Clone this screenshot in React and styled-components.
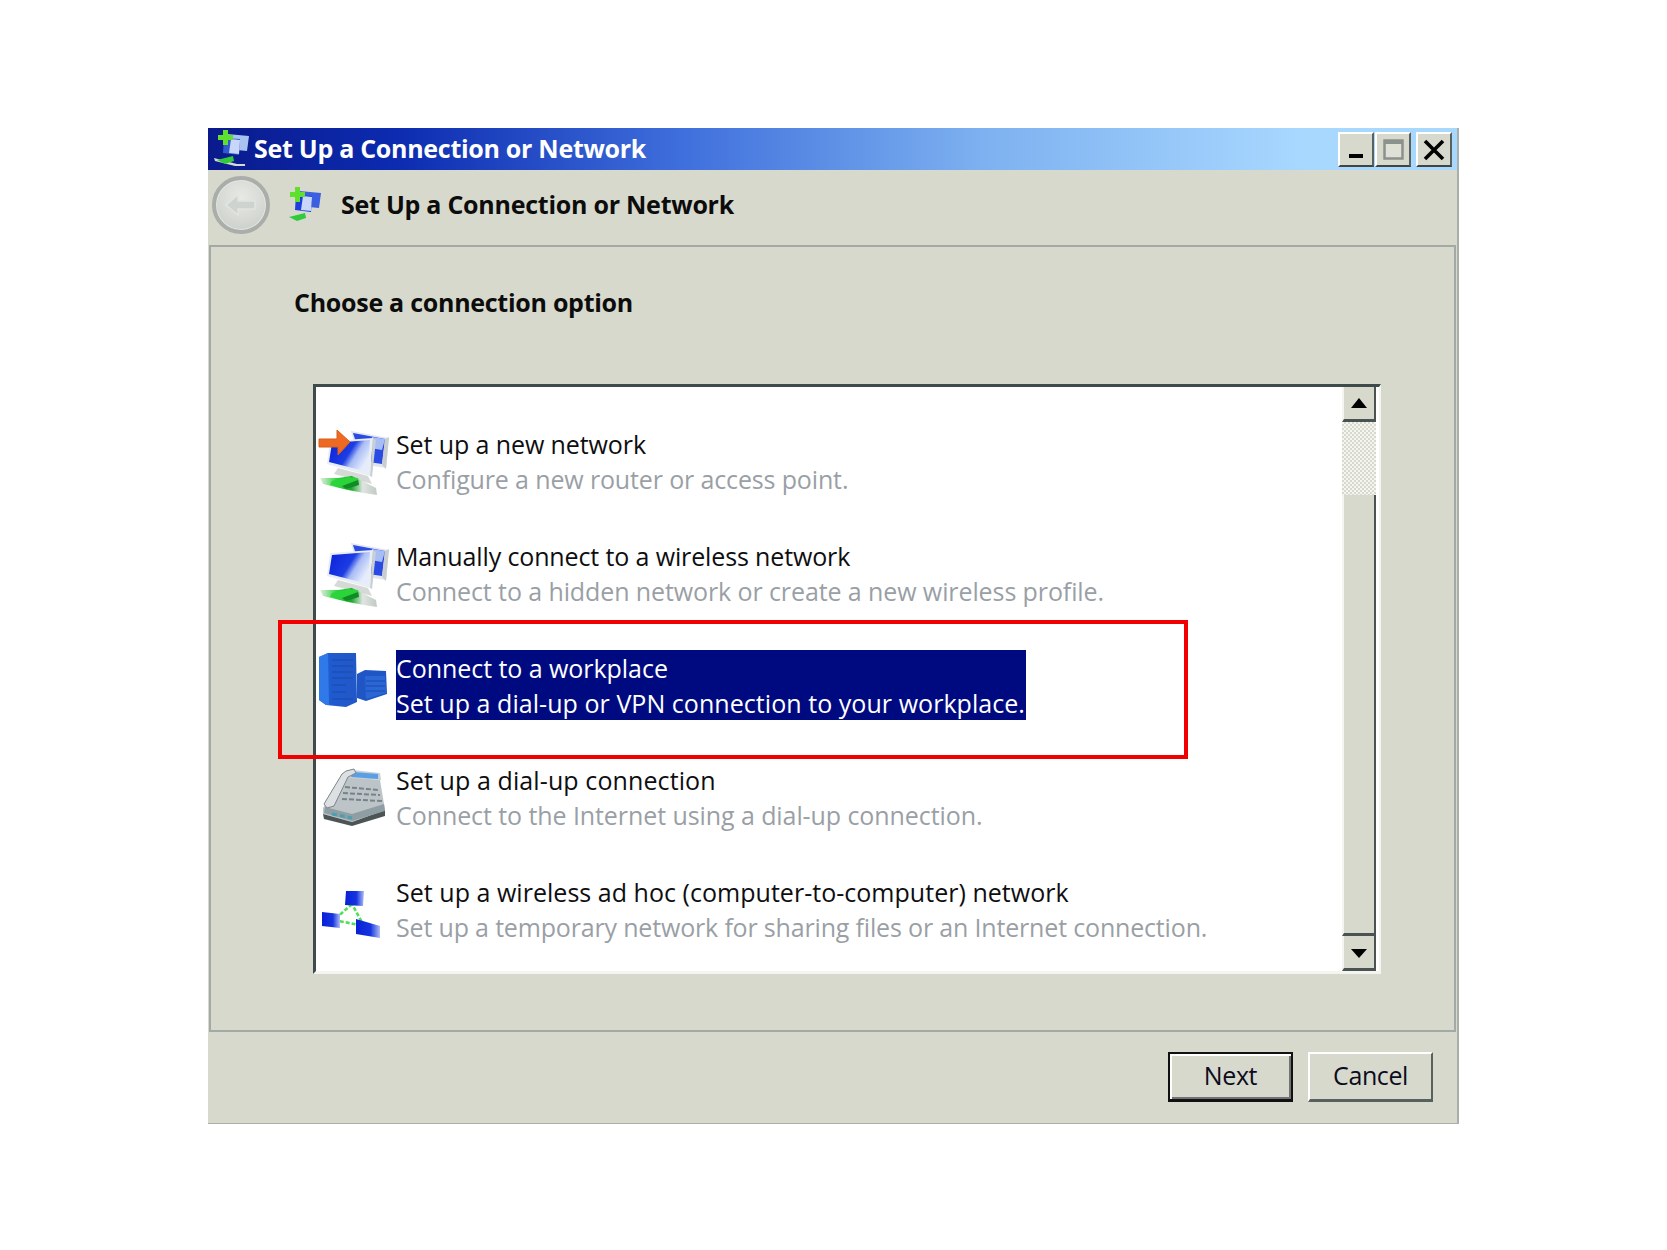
import React from "react";
import styled, { createGlobalStyle } from "styled-components";

const GlobalStyle = createGlobalStyle`
  html, body {
    margin: 0;
    padding: 0;
    background: #ffffff;
  }
  body {
    font-family: "Open Sans", "Noto Sans", sans-serif;
  }
`;

const Page = styled.div`
  width: 1667px;
  height: 1250px;
  padding: 128px 0 0 208px;
  box-sizing: border-box;
`;

const Window = styled.div`
  width: 1251px;
  height: 996px;
  background: #d8d9cd;
  border-right: 2px solid #a9b0aa;
  border-bottom: 1px solid #a9b0aa;
  box-sizing: border-box;
  display: flex;
  flex-direction: column;
`;

const TitleBar = styled.div`
  height: 42px;
  flex: none;
  display: flex;
  align-items: center;
  padding: 0 5px 2px 5px;
  box-sizing: border-box;
  background: linear-gradient(90deg, #0a1a8c 0%, #0c2bb0 15%, #3f6fdc 38%, #7db1f0 62%, #a9d8ff 88%, #a9d8ff 100%);
`;

const TitleText = styled.div`
  margin-left: 3px;
  color: #ffffff;
  font-size: 25px;
  font-weight: 700;
  letter-spacing: -0.28px;
  flex: 1;
`;

const WindowButtons = styled.div`
  display: flex;
  gap: 1px;
  margin-top: 3px;
`;

const CaptionButton = styled.div`
  width: 36px;
  height: 35px;
  margin-left: ${(p) => p.$push || 0}px;
  box-sizing: border-box;
  background: #d8d9cd;
  border-top: 2px solid #ffffff;
  border-left: 2px solid #ffffff;
  border-right: 2px solid #59615e;
  border-bottom: 2px solid #3e4644;
  display: flex;
  align-items: center;
  justify-content: center;
`;

const NavBar = styled.div`
  height: 75px;
  flex: none;
  display: flex;
  align-items: center;
  padding: 0 0 5px 4px;
  box-sizing: border-box;
`;

const BackButton = styled.div`
  width: 58px;
  height: 58px;
  border-radius: 50%;
  box-sizing: border-box;
  border: 4px solid #a9aeaa;
  box-shadow: inset 0 0 0 1px #e4e6e1;
  background: radial-gradient(circle at 50% 35%, #e8eae5 0%, #d5d8d2 60%, #c3c8c4 100%);
  display: flex;
  align-items: center;
  justify-content: center;
`;

const NavIcon = styled.div`
  margin-left: 15px;
`;

const NavTitle = styled.div`
  margin: -2px 0 0 18px;
  color: #0c0c0c;
  font-size: 25px;
  font-weight: 700;
  letter-spacing: -0.25px;
`;

const Panel = styled.div`
  flex: none;
  height: 787px;
  margin-left: 1px;
  margin-right: 1px;
  box-sizing: border-box;
  border: 2px solid #a3aaa6;
  padding: 35px 0 0 83px;
`;

const Heading = styled.div`
  color: #0c0c0c;
  font-size: 25px;
  line-height: 40px;
  font-weight: 700;
  letter-spacing: -0.27px;
`;

const ListBox = styled.div`
  position: relative;
  margin: 62px 0 0 19px;
  width: 1068px;
  height: 590px;
  box-sizing: border-box;
  background: #ffffff;
  border-top: 3px solid #3f4a4a;
  border-left: 3px solid #3f4a4a;
  border-right: 2px solid #f4f5f0;
  border-bottom: 3px solid #f4f5f0;
  display: flex;
`;

const Rows = styled.div`
  flex: 1;
  padding-top: 40px;
  display: flex;
  flex-direction: column;
  overflow: hidden;
`;

const Row = styled.div`
  height: 112px;
  flex: none;
  display: flex;
  align-items: flex-start;
`;

const IconSlot = styled.div`
  width: 80px;
  height: 78px;
  flex: none;
  padding: 1px 0 0 2px;
  box-sizing: border-box;
`;

const RowText = styled.div`
  padding: ${(p) => (p.$selected ? "1px" : "0")} 1px 0 0;
  margin-top: ${(p) => (p.$selected ? "-1px" : "0")};
  background: ${(p) => (p.$selected ? "#000a80" : "transparent")};
  height: ${(p) => (p.$selected ? "70px" : "auto")};
  box-sizing: border-box;
`;

const RowTitle = styled.div`
  font-size: 25px;
  line-height: 35px;
  letter-spacing: ${(p) => p.$track}px;
  color: ${(p) => (p.$selected ? "#ffffff" : "#0e0e10")};
`;

const RowSub = styled.div`
  font-size: 25px;
  line-height: 35px;
  letter-spacing: ${(p) => p.$track}px;
  color: ${(p) => (p.$selected ? "#ffffff" : "#9a9fa6")};
`;

const Scrollbar = styled.div`
  width: 34px;
  flex: none;
  margin-right: 3px;
  display: flex;
  flex-direction: column;
`;

const ScrollButton = styled.div`
  height: 35px;
  flex: none;
  box-sizing: border-box;
  background: #d8d9cd;
  border-left: 2px solid #f4f5f0;
  border-right: 2px solid #4a5352;
  border-bottom: 3px solid #4a5352;
  padding-top: ${(p) => (p.$down ? "3px" : "0")};
  display: flex;
  align-items: center;
  justify-content: center;
`;

const ScrollTrack = styled.div`
  height: 73px;
  flex: none;
  background-color: #ffffff;
  background-image: repeating-conic-gradient(#d8d9cd 0% 25%, #f6f6f1 0% 50%);
  background-size: 4px 4px;
`;

const ScrollThumb = styled.div`
  flex: 1;
  box-sizing: border-box;
  background: #d8d9cd;
  border-left: 2px solid #f4f5f0;
  border-right: 2px solid #4a5352;
  border-bottom: 3px solid #4a5352;
`;

const Highlight = styled.div`
  position: absolute;
  left: -38px;
  top: 233px;
  width: 910px;
  height: 139px;
  box-sizing: border-box;
  border: 4px solid #f00000;
  pointer-events: none;
`;

const Footer = styled.div`
  flex: 1;
  display: flex;
  justify-content: flex-end;
  align-items: flex-start;
  gap: 15px;
  padding: 20px 24px 0 0;
`;

const DialogButton = styled.div`
  width: 125px;
  height: 50px;
  box-sizing: border-box;
  background: #d8d9cd;
  color: #0c0c20;
  font-size: 25px;
  letter-spacing: -0.4px;
  padding-bottom: 3px;
  display: flex;
  align-items: center;
  justify-content: center;
  border-top: 2px solid ${(p) => (p.$default ? "#111111" : "#ffffff")};
  border-left: 2px solid ${(p) => (p.$default ? "#111111" : "#ffffff")};
  border-right: 2px solid ${(p) => (p.$default ? "#111111" : "#59615e")};
  border-bottom: 3px solid ${(p) => (p.$default ? "#111111" : "#59615e")};
  box-shadow: ${(p) => (p.$default ? "inset 2px 2px 0 #ffffff, inset -2px -2px 0 #6d7472" : "none")};
`;

const IconSvg = styled.svg`
  display: block;
  overflow: visible;
`;

const NetworkIcon = ({ arrow }) => (
  <IconSvg width="76" height="72" viewBox="0 0 76 72">
    <defs>
      <linearGradient id="screenFront" x1="0" y1="0" x2="1" y2="0.5">
        <stop offset="0" stopColor="#0a1fd8" />
        <stop offset="0.55" stopColor="#1d3de4" />
        <stop offset="0.72" stopColor="#a8bcf6" />
        <stop offset="1" stopColor="#e6ecfb" />
      </linearGradient>
      <linearGradient id="cable" x1="0" y1="0" x2="1" y2="0">
        <stop offset="0" stopColor="#e6ebe4" />
        <stop offset="0.3" stopColor="#2bd43a" />
        <stop offset="0.55" stopColor="#18a82c" />
        <stop offset="0.75" stopColor="#dfe5e0" />
        <stop offset="1" stopColor="#c2cac4" />
      </linearGradient>
    </defs>
    {/* back monitor */}
    <path d="M33 3 L71 10 L68 40 L42 36 Z" fill="#e2e6ee" />
    <path d="M35 5 L67 11 L64 36 L44 33 Z" fill="#2a4ae4" />
    <path d="M54 9 L67 11 L64 22 L52 20 Z" fill="#a8bcf6" />
    <path d="M67 11 L71 9 L68 41 L64 37 Z" fill="#c8ced0" />
    {/* front monitor */}
    <path d="M12 13 L55 10 L52 48 L9 36 Z" fill="#e9eef6" />
    <path d="M14 15 L52 12 L50 44 L11 34 Z" fill="url(#screenFront)" />
    <path d="M55 10 L58 12 L54 49 L52 48 Z" fill="#c9cfd2" />
    {/* stand */}
    <path d="M20 40 L50 48 L54 56 L16 46 Z" fill="#d5dad6" />
    {/* cable */}
    <path d="M2 50 L20 50 L34 48 L58 60 L59 67 L46 65 L30 62 L5 56 Z" fill="url(#cable)" />
    <path d="M14 53 L30 49 L40 50 L41 56 L28 60 L12 57 Z" fill="#2bd43a" />
    <path d="M24 58 L40 52 L41 57 L28 61 Z" fill="#128a26" />
    {arrow && (
      <path d="M1 11 L19 11 L19 2 L32 14 L20 27 L20 19 L1 19 Z" fill="#ee6a22" stroke="#d85e1d" strokeWidth="1" />
    )}
  </IconSvg>
);

const WorkplaceIcon = () => (
  <IconSvg width="76" height="60" viewBox="0 0 76 60">
    <defs>
      <linearGradient id="tower" x1="0" y1="0" x2="1" y2="0">
        <stop offset="0" stopColor="#2c74e4" />
        <stop offset="0.3" stopColor="#1f5ad0" />
        <stop offset="1" stopColor="#2158c8" />
      </linearGradient>
    </defs>
    <path d="M1 5 L10 1 L38 1 L39 50 L28 55 L8 53 L1 48 Z" fill="url(#tower)" />
    <path d="M10 1 L11 53 L8 53 L1 48 L1 5 Z" fill="#2f7ae8" />
    <path d="M14 8 H35 M14 14 H35 M14 20 H35 M14 26 H35 M14 33 H28 M14 40 H28 M14 47 H35" stroke="#1a4aa8" strokeWidth="1.2" />
    <path d="M39 22 L47 18 L68 19 L69 42 L48 49 L39 46 Z" fill="#1f55c4" />
    <path d="M47 24 L67 24 L68 41 L48 47 Z" fill="#2a66d6" />
    <path d="M48 29 H67 M48 34 H67 M48 39 H67" stroke="#1a4aa8" strokeWidth="1.2" />
  </IconSvg>
);

const FaxIcon = () => (
  <IconSvg width="76" height="64" viewBox="0 0 76 64">
    <path d="M5 44 L26 12 L62 16 L67 46 L34 58 L5 50 Z" fill="#bcc4c8" />
    <path d="M5 50 L34 58 L67 46 L67 52 L34 62 L6 55 Z" fill="#4c5556" />
    <path d="M7 43 L34 50 L66 40 L67 47 L34 57 L6 49 Z" fill="#8f9ea2" />
    <path d="M28 11 L34 6 L62 9 L63 16 L30 14 Z" fill="#c8cfd2" />
    <path d="M35 8 L60 10 L60 15 L33 13 Z" fill="#5a9fe6" />
    <path d="M6 40 L24 10 L28 7 L36 5 L38 9 L30 13 L16 42 L9 44 Z" fill="#dde0e2" stroke="#7d8587" strokeWidth="1" />
    <path d="M27 23 L60 26 M25 29 L62 31 M24 35 L64 37" stroke="#77838a" strokeWidth="2" strokeDasharray="5 2" />
    <path d="M14 50 L34 54" stroke="#4a9fb4" strokeWidth="3" strokeDasharray="5 3" />
  </IconSvg>
);

const AdHocIcon = () => (
  <IconSvg width="76" height="66" viewBox="0 0 76 66">
    <defs>
      <linearGradient id="node" x1="0" y1="0" x2="1" y2="0">
        <stop offset="0" stopColor="#0a1fd8" />
        <stop offset="0.6" stopColor="#1534e0" />
        <stop offset="1" stopColor="#aebcf4" />
      </linearGradient>
    </defs>
    <path d="M34 28 L16 44 L46 50 Z" fill="none" stroke="#52e052" strokeWidth="2.6" strokeDasharray="4 2" />
    <path d="M28 15 L46 15 L45 30 L27 29 Z" fill="url(#node)" />
    <path d="M4 36 L22 38 L22 52 L4 50 Z" fill="url(#node)" />
    <path d="M38 43 L62 50 L62 62 L38 58 Z" fill="url(#node)" />
  </IconSvg>
);

const SmallNetIcon = ({ dark }) => (
  <IconSvg width="38" height="38" viewBox="0 0 38 38">
    <path d="M14 5 L36 7 L34 22 L14 20 Z" fill={dark ? "#a9c3f0" : "#3a5fe0"} />
    <path d="M11 9 L27 10 L26 26 L10 24 Z" fill={dark ? "#3158cc" : "#1d3edc"} />
    <path d="M18 10 L27 11 L26 25 L16 24 Z" fill="#c8d6f8" />
    <path d="M1 29 L24 35 L32 35 L32 37 L22 37 L2 32 Z" fill="#d5d9d2" />
    <path d="M4 31 L20 27 L21 32 L12 35 Z" fill="#2fcb3a" />
    <path d="M5 6 H10 V1 H15 V6 H20 V11 H15 V16 H10 V11 H5 Z" fill="#5ee02c" />
  </IconSvg>
);

const options = [
  {
    title: "Set up a new network",
    sub: "Configure a new router or access point.",
    icon: <NetworkIcon arrow />,
    track: [-0.1, -0.14],
  },
  {
    title: "Manually connect to a wireless network",
    sub: "Connect to a hidden network or create a new wireless profile.",
    icon: <NetworkIcon />,
    track: [-0.13, -0.1],
  },
  {
    title: "Connect to a workplace",
    sub: "Set up a dial-up or VPN connection to your workplace.",
    icon: <WorkplaceIcon />,
    selected: true,
    track: [-0.05, 0.05],
  },
  {
    title: "Set up a dial-up connection",
    sub: "Connect to the Internet using a dial-up connection.",
    icon: <FaxIcon />,
    track: [0.1, -0.08],
  },
  {
    title: "Set up a wireless ad hoc (computer-to-computer) network",
    sub: "Set up a temporary network for sharing files or an Internet connection.",
    icon: <AdHocIcon />,
    track: [0.03, -0.17],
  },
];

const App = () => {
  return (
    <Page>
      <GlobalStyle />
      <Window>
        <TitleBar>
          <SmallNetIcon dark />
          <TitleText>Set Up a Connection or Network</TitleText>
          <WindowButtons>
            <CaptionButton>
              <svg width="18" height="18" viewBox="0 0 18 18">
                <rect x="2" y="13" width="14" height="4" fill="#000" />
              </svg>
            </CaptionButton>
            <CaptionButton>
              <svg width="21" height="21" viewBox="0 0 21 21">
                <rect x="1.5" y="1.5" width="18" height="18" fill="#dfe0d6" stroke="#8b918d" strokeWidth="2.5" />
                <rect x="1" y="1" width="19" height="4" fill="#8b918d" />
              </svg>
            </CaptionButton>
            <CaptionButton $push={4}>
              <svg width="22" height="22" viewBox="0 0 22 22">
                <path d="M2 2 L20 20 M20 2 L2 20" stroke="#000" strokeWidth="3.6" />
              </svg>
            </CaptionButton>
          </WindowButtons>
        </TitleBar>
        <NavBar>
          <BackButton>
            <svg width="34" height="26" viewBox="0 0 34 26">
              <path d="M2 13 L14 3 L14 9 L31 9 L31 17 L14 17 L14 23 Z" fill="#cfd3cf" stroke="#e2e4e0" strokeWidth="1.5" />
            </svg>
          </BackButton>
          <NavIcon>
            <SmallNetIcon />
          </NavIcon>
          <NavTitle>Set Up a Connection or Network</NavTitle>
        </NavBar>
        <Panel>
          <Heading>Choose a connection option</Heading>
          <ListBox>
            <Rows>
              {options.map((o) => (
                <Row key={o.title}>
                  <IconSlot>{o.icon}</IconSlot>
                  <RowText $selected={o.selected}>
                    <RowTitle $selected={o.selected} $track={o.track[0]}>{o.title}</RowTitle>
                    <RowSub $selected={o.selected} $track={o.track[1]}>{o.sub}</RowSub>
                  </RowText>
                </Row>
              ))}
            </Rows>
            <Scrollbar>
              <ScrollButton>
                <svg width="16" height="11" viewBox="0 0 16 11">
                  <path d="M8 0 L16 10 L0 10 Z" fill="#000" />
                </svg>
              </ScrollButton>
              <ScrollTrack />
              <ScrollThumb />
              <ScrollButton $down>
                <svg width="16" height="10" viewBox="0 0 16 10">
                  <path d="M0 0 L16 0 L8 9 Z" fill="#000" />
                </svg>
              </ScrollButton>
            </Scrollbar>
            <Highlight />
          </ListBox>
        </Panel>
        <Footer>
          <DialogButton $default>Next</DialogButton>
          <DialogButton>Cancel</DialogButton>
        </Footer>
      </Window>
    </Page>
  );
};

export default App;
